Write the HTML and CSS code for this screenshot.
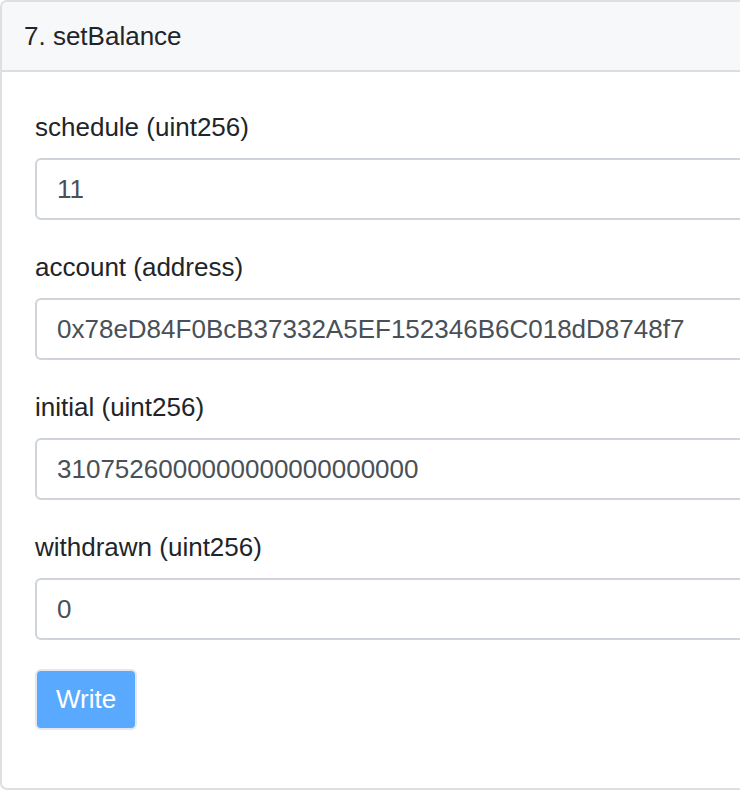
FILE: index.html
```html
<!DOCTYPE html>
<html>
<head>
<meta charset="utf-8">
<link rel="stylesheet" href="styles.css">
</head>
<body>
<div class="card">
  <div class="card-header">7. setBalance</div>
  <div class="card-body">
    <div class="form-group">
      <label class="label">schedule (uint256)</label>
      <div class="input">11</div>
    </div>
    <div class="form-group">
      <label class="label">account (address)</label>
      <div class="input">0x78eD84F0BcB37332A5EF152346B6C018dD8748f7</div>
    </div>
    <div class="form-group">
      <label class="label">initial (uint256)</label>
      <div class="input">3107526000000000000000000</div>
    </div>
    <div class="form-group">
      <label class="label">withdrawn (uint256)</label>
      <div class="input">0</div>
    </div>
    <button class="btn">Write</button>
  </div>
</div>
</body>
</html>
```
FILE: styles.css
```css
html, body {
  margin: 0;
  padding: 0;
  background: #ffffff;
  overflow: hidden;
}
body {
  font-family: "Liberation Sans", Arial, sans-serif;
  font-size: 26px;
  color: #212529;
  width: 740px;
  height: 790px;
}
.card {
  width: 1000px;
  height: 790px;
  box-sizing: border-box;
  border: 2px solid #dfdfdf;
  border-radius: 7px;
  background: #ffffff;
  display: flex;
  flex-direction: column;
}
.card-header {
  height: 70px;
  flex: none;
  box-sizing: border-box;
  background: #f7f8fa;
  border-bottom: 2px solid #dcdde0;
  padding: 0 22px;
  display: flex;
  align-items: center;
  line-height: 1;
  color: #212529;
  border-radius: 5px 5px 0 0;
}
.card-body {
  padding: 36px 33px 0 33px;
  display: flex;
  flex-direction: column;
  align-items: flex-start;
}
.form-group {
  width: 100%;
  margin-bottom: 28px;
  display: flex;
  flex-direction: column;
}
.label {
  line-height: 39px;
  margin-bottom: 11px;
  color: #212529;
}
.input {
  height: 62px;
  box-sizing: border-box;
  border: 2px solid #ced4da;
  border-radius: 6px;
  padding: 0 20px;
  display: flex;
  align-items: center;
  color: #495057;
  background: #ffffff;
}
.btn {
  margin-top: 1px;
  height: 61px;
  padding: 0 19px;
  box-sizing: border-box;
  font-family: "Liberation Sans", Arial, sans-serif;
  font-size: 26px;
  color: #ffffff;
  background: #59aaff;
  border: 2px solid #e4e8ee;
  border-radius: 6px;
}
```
